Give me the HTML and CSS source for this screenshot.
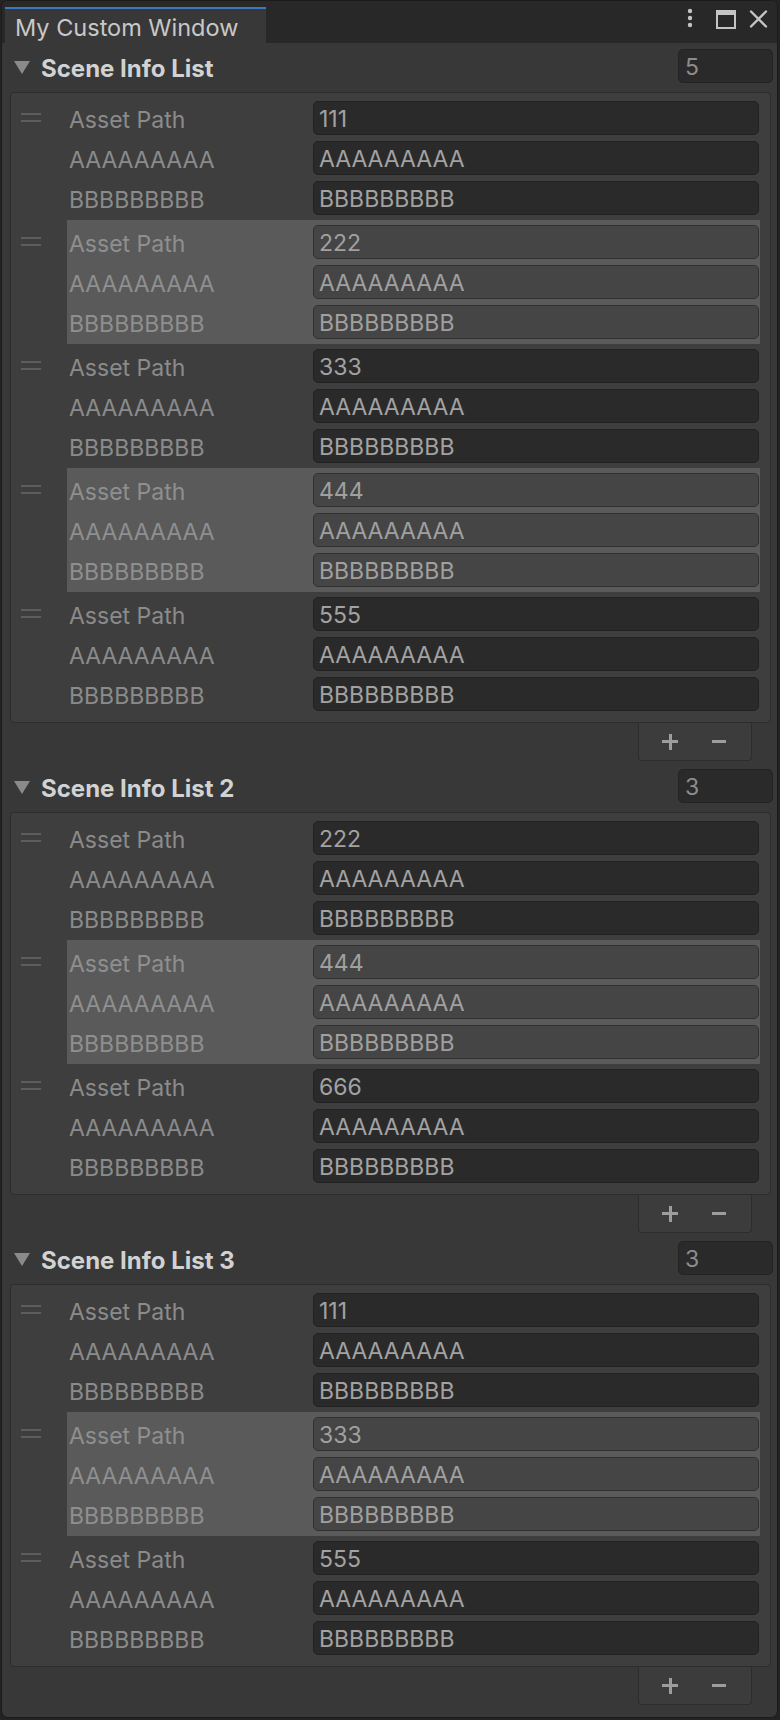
FILE: index.html
```html
<!DOCTYPE html>
<html>
<head>
<meta charset="utf-8">
<title>My Custom Window</title>
<link rel="stylesheet" href="styles.css">
</head>
<body>
<div class="window">
  <div class="tabbar">
    <div class="tab">My Custom Window</div>
    <div class="tab-icons">
      <svg class="ic-kebab" width="8" height="22" viewBox="0 0 8 22"><circle cx="4" cy="3" r="2.2" fill="#c4c4c4"/><circle cx="4" cy="10" r="2.2" fill="#c4c4c4"/><circle cx="4" cy="17" r="2.2" fill="#c4c4c4"/></svg>
      <svg class="ic-max" width="22" height="21" viewBox="0 0 22 21"><rect x="2" y="2" width="18" height="17" fill="none" stroke="#c4c4c4" stroke-width="2"/><rect x="2" y="2" width="18" height="4" fill="#c4c4c4"/></svg>
      <svg class="ic-close" width="19" height="18" viewBox="0 0 19 18"><path d="M2 1.5 L17 16.5 M17 1.5 L2 16.5" stroke="#c4c4c4" stroke-width="2.4" stroke-linecap="round"/></svg>
    </div>
  </div>

  <div class="content">
    <section class="section">
      <div class="header">
        <svg class="tri" width="18" height="14" viewBox="0 0 18 14"><polygon points="1,1 17,1 9,14" fill="#8a8a8a"/></svg>
        <span class="title">Scene Info List</span>
        <div class="count">5</div>
      </div>
      <div class="box">
        <div class="el"><div class="handle"><i></i><i></i></div><div class="body">
          <div class="row"><span class="label">Asset Path</span><div class="field">111</div></div>
          <div class="row"><span class="label">AAAAAAAAA</span><div class="field">AAAAAAAAA</div></div>
          <div class="row"><span class="label">BBBBBBBBB</span><div class="field">BBBBBBBBB</div></div>
        </div></div>
        <div class="el sel"><div class="handle"><i></i><i></i></div><div class="body">
          <div class="row"><span class="label">Asset Path</span><div class="field">222</div></div>
          <div class="row"><span class="label">AAAAAAAAA</span><div class="field">AAAAAAAAA</div></div>
          <div class="row"><span class="label">BBBBBBBBB</span><div class="field">BBBBBBBBB</div></div>
        </div></div>
        <div class="el"><div class="handle"><i></i><i></i></div><div class="body">
          <div class="row"><span class="label">Asset Path</span><div class="field">333</div></div>
          <div class="row"><span class="label">AAAAAAAAA</span><div class="field">AAAAAAAAA</div></div>
          <div class="row"><span class="label">BBBBBBBBB</span><div class="field">BBBBBBBBB</div></div>
        </div></div>
        <div class="el sel"><div class="handle"><i></i><i></i></div><div class="body">
          <div class="row"><span class="label">Asset Path</span><div class="field">444</div></div>
          <div class="row"><span class="label">AAAAAAAAA</span><div class="field">AAAAAAAAA</div></div>
          <div class="row"><span class="label">BBBBBBBBB</span><div class="field">BBBBBBBBB</div></div>
        </div></div>
        <div class="el"><div class="handle"><i></i><i></i></div><div class="body">
          <div class="row"><span class="label">Asset Path</span><div class="field">555</div></div>
          <div class="row"><span class="label">AAAAAAAAA</span><div class="field">AAAAAAAAA</div></div>
          <div class="row"><span class="label">BBBBBBBBB</span><div class="field">BBBBBBBBB</div></div>
        </div></div>
      </div>
      <div class="footer"><div class="btns"><span class="plus"></span><span class="minus"></span></div></div>
    </section>

    <section class="section">
      <div class="header">
        <svg class="tri" width="18" height="14" viewBox="0 0 18 14"><polygon points="1,1 17,1 9,14" fill="#8a8a8a"/></svg>
        <span class="title">Scene Info List 2</span>
        <div class="count">3</div>
      </div>
      <div class="box">
        <div class="el"><div class="handle"><i></i><i></i></div><div class="body">
          <div class="row"><span class="label">Asset Path</span><div class="field">222</div></div>
          <div class="row"><span class="label">AAAAAAAAA</span><div class="field">AAAAAAAAA</div></div>
          <div class="row"><span class="label">BBBBBBBBB</span><div class="field">BBBBBBBBB</div></div>
        </div></div>
        <div class="el sel"><div class="handle"><i></i><i></i></div><div class="body">
          <div class="row"><span class="label">Asset Path</span><div class="field">444</div></div>
          <div class="row"><span class="label">AAAAAAAAA</span><div class="field">AAAAAAAAA</div></div>
          <div class="row"><span class="label">BBBBBBBBB</span><div class="field">BBBBBBBBB</div></div>
        </div></div>
        <div class="el"><div class="handle"><i></i><i></i></div><div class="body">
          <div class="row"><span class="label">Asset Path</span><div class="field">666</div></div>
          <div class="row"><span class="label">AAAAAAAAA</span><div class="field">AAAAAAAAA</div></div>
          <div class="row"><span class="label">BBBBBBBBB</span><div class="field">BBBBBBBBB</div></div>
        </div></div>
      </div>
      <div class="footer"><div class="btns"><span class="plus"></span><span class="minus"></span></div></div>
    </section>

    <section class="section">
      <div class="header">
        <svg class="tri" width="18" height="14" viewBox="0 0 18 14"><polygon points="1,1 17,1 9,14" fill="#8a8a8a"/></svg>
        <span class="title">Scene Info List 3</span>
        <div class="count">3</div>
      </div>
      <div class="box">
        <div class="el"><div class="handle"><i></i><i></i></div><div class="body">
          <div class="row"><span class="label">Asset Path</span><div class="field">111</div></div>
          <div class="row"><span class="label">AAAAAAAAA</span><div class="field">AAAAAAAAA</div></div>
          <div class="row"><span class="label">BBBBBBBBB</span><div class="field">BBBBBBBBB</div></div>
        </div></div>
        <div class="el sel"><div class="handle"><i></i><i></i></div><div class="body">
          <div class="row"><span class="label">Asset Path</span><div class="field">333</div></div>
          <div class="row"><span class="label">AAAAAAAAA</span><div class="field">AAAAAAAAA</div></div>
          <div class="row"><span class="label">BBBBBBBBB</span><div class="field">BBBBBBBBB</div></div>
        </div></div>
        <div class="el"><div class="handle"><i></i><i></i></div><div class="body">
          <div class="row"><span class="label">Asset Path</span><div class="field">555</div></div>
          <div class="row"><span class="label">AAAAAAAAA</span><div class="field">AAAAAAAAA</div></div>
          <div class="row"><span class="label">BBBBBBBBB</span><div class="field">BBBBBBBBB</div></div>
        </div></div>
      </div>
      <div class="footer"><div class="btns"><span class="plus"></span><span class="minus"></span></div></div>
    </section>
  </div>
</div>
</body>
</html>
```
FILE: styles.css
```css
* { box-sizing: border-box; }
html, body { margin: 0; padding: 0; }
body {
  width: 780px;
  height: 1720px;
  background: #232323;
  font-family: Inter, "Noto Sans", sans-serif;
  font-size: 23px;
  overflow: hidden;
}
.window {
  margin-left: 1px;
  width: 777px;
  height: 1718px;
  background: #383838;
  border: 1px solid #1b1b1b;
  border-radius: 7px;
  overflow: hidden;
  display: flex;
  flex-direction: column;
}
.tabbar {
  height: 42px;
  flex: none;
  background: #282828;
  display: flex;
  align-items: flex-end;
  padding-left: 3px;
  padding-right: 9px;
}
.tab {
  width: 261px;
  height: 36px;
  background: #383838;
  border-top: 2px solid #3a79bb;
  color: #c8c8c8;
  font-size: 23.5px;
  padding: 3px 0 0 10px;
  line-height: 31px;
  white-space: nowrap;
}
.tab-icons {
  margin-left: auto;
  align-self: center;
  display: flex;
  align-items: center;
  margin-top: -6px;
}
.ic-kebab { margin-right: 21px; }
.ic-max { margin-right: 12px; }
.content {
  display: flex;
  flex-direction: column;
}
.header {
  display: flex;
  align-items: center;
  height: 49px;
  padding: 6px 4px 9px 11px;
}
.section + .section .header {
  height: 51px;
  padding-top: 8px;
}
.tri { margin-top: 1px; }
.title {
  margin-left: 10px;
  padding-top: 4px;
  color: #d2d2d2;
  font-size: 24px;
  font-weight: 700;
}
.count {
  margin-left: auto;
  width: 95px;
  height: 34px;
  background: #2a2a2a;
  border: 1px solid #232323;
  border-radius: 5px;
  color: #8c8c8c;
  padding: 3px 0 0 6px;
  line-height: 29px;
}
.box {
  margin: 0 6px 0 8px;
  background: #3e3e3e;
  border: 1px solid #2d2d2d;
  border-radius: 4px;
  padding: 3px 0 6px 0;
}
.el {
  display: flex;
  height: 124px;
}
.handle {
  width: 56px;
  flex: none;
  padding: 17px 0 0 10px;
  display: flex;
  flex-direction: column;
  gap: 5px;
}
.handle i {
  display: block;
  width: 20px;
  height: 2px;
  background: #5d5d5d;
}
.body {
  flex: 1;
  margin-right: 10px;
  padding: 2px 0;
}
.row {
  display: flex;
  align-items: center;
  height: 40px;
}
.label {
  width: 246px;
  flex: none;
  padding: 4px 0 0 2px;
  color: #8b8b8b;
  white-space: nowrap;
}
.field {
  flex: 1;
  height: 34px;
  margin-right: 1px;
  background: #2a2a2a;
  border: 1px solid #222222;
  border-radius: 5px;
  color: #a2a2a2;
  padding: 3px 0 0 5px;
  line-height: 29px;
  white-space: nowrap;
}
.sel .body { background: #5a5a5a; }
.sel .field {
  background: #454545;
  border-color: #303030;
  color: #a0a0a0;
}
.sel .label { color: #8f8f8f; }
.footer {
  display: flex;
  justify-content: flex-end;
  padding-right: 25px;
}
.btns {
  position: relative;
  width: 114px;
  height: 38px;
  background: #3c3c3c;
  border: 1px solid #2d2d2d;
  border-top: none;
  border-radius: 0 0 4px 4px;
}
.plus, .minus {
  position: absolute;
  top: 17px;
  height: 3px;
  width: 16px;
  background: #9d9d9d;
}
.plus { left: 23px; }
.minus { left: 73px; width: 14px; }
.plus::after {
  content: "";
  position: absolute;
  left: 6.5px;
  top: -6.5px;
  width: 3px;
  height: 16px;
  background: #9d9d9d;
}
```
